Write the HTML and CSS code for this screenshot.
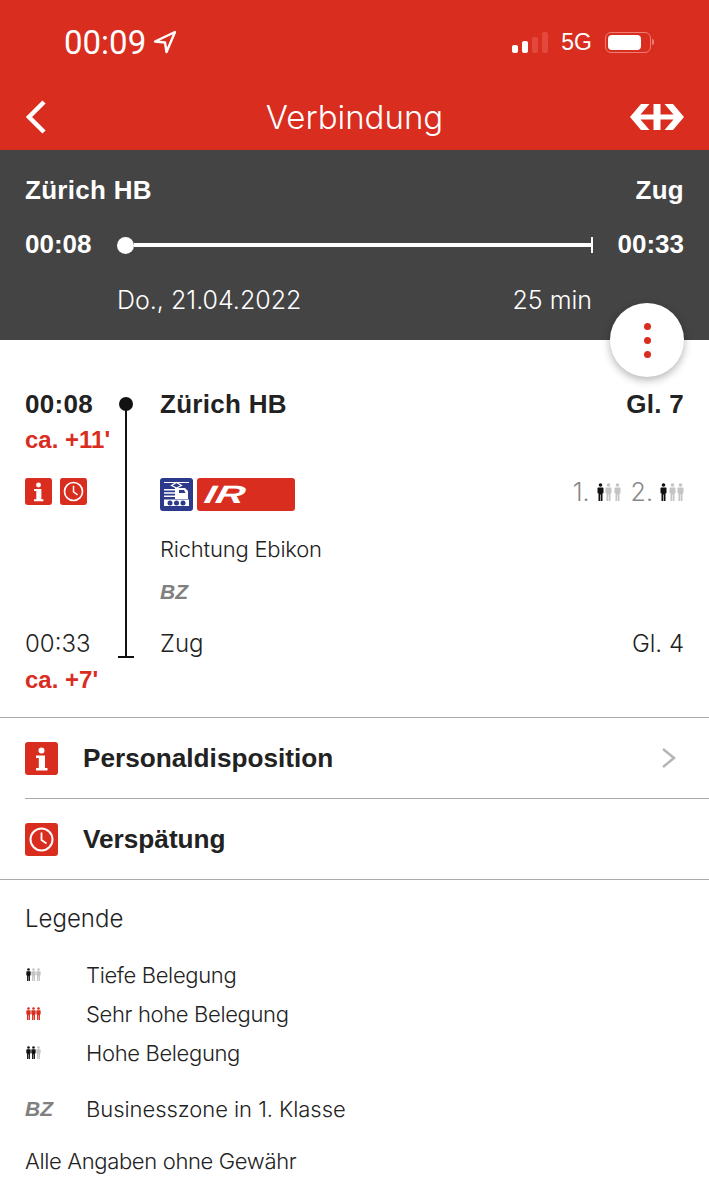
FILE: index.html
```html
<!DOCTYPE html>
<html lang="de">
<head>
    <meta charset="UTF-8">
    <meta name="viewport" content="width=device-width, initial-scale=1.0">
    <title>Verbindung</title>
    <link rel="stylesheet" href="styles.css">
</head>
<body>
    <svg class="defs" width="0" height="0" aria-hidden="true">
        <symbol id="person" viewBox="0 0 6 18">
            <circle cx="3" cy="2" r="1.8"/>
            <path d="M0.6 4.600h4.800a.6.6 0 0 1 .6.6v4.900l-1 .4V18H3.300v-6.500h-.6V18H1v-7.500l-1-.4V5.200a.6.6 0 0 1 .6-.6z"/>
        </symbol>
        <symbol id="info" viewBox="0 0 33 33">
            <rect width="33" height="33" rx="3" fill="#d92d1f"/>
            <circle cx="16.500" cy="8.500" r="3" fill="#fff"/>
            <path d="M11 13.500h9v12.500h2.500v2.500H11V26h2.800V16H11z" fill="#fff"/>
        </symbol>
        <symbol id="clock" viewBox="0 0 33 33">
            <rect width="33" height="33" rx="3" fill="#d92d1f"/>
            <circle cx="16.500" cy="16.500" r="11" fill="none" stroke="#fff" stroke-width="2"/>
            <path d="M16.500 9.500v7.500l5 3.500" fill="none" stroke="#fff" stroke-width="1.800"/>
        </symbol>
    </svg>

    <header class="app-header">
        <div class="status-bar">
            <div class="status-left">
                <span class="status-time">00:09</span>
                <svg class="location-icon" width="24" height="24" viewBox="0 0 24 24">
                    <path d="M22 2 2 11.500l10 1 1.500 9.500z" fill="none" stroke="#fff" stroke-width="2.400" stroke-linejoin="round"/>
                </svg>
            </div>
            <div class="status-right">
                <div class="signal">
                    <span class="bar bar-1"></span>
                    <span class="bar bar-2"></span>
                    <span class="bar bar-3 off"></span>
                    <span class="bar bar-4 off"></span>
                </div>
                <span class="status-net">5G</span>
                <div class="battery"><span class="battery-fill"></span></div>
                <span class="battery-cap"></span>
            </div>
        </div>
        <div class="nav-bar">
            <svg class="back-icon" width="22" height="34" viewBox="0 0 22 34">
                <path d="M19 2 4 17l15 15" fill="none" stroke="#fff" stroke-width="4.500"/>
            </svg>
            <h1>Verbindung</h1>
            <svg class="sbb-logo" width="54" height="26" viewBox="0 0 54 26">
                <path d="M0 13 11 0h8.500l-9 10.500h13V0h7v10.500h13l-9-10.500H43l11 13-11 13h-8.500l9-10.500h-13V26h-7V15.500h-13l9 10.500H11z" fill="#fff"/>
            </svg>
        </div>
    </header>

    <section class="summary">
        <div class="summary-stations">
            <span>Zürich HB</span>
            <span>Zug</span>
        </div>
        <div class="summary-times">
            <span>00:08</span>
            <div class="summary-line"><span class="line-dot"></span><span class="line-bar"></span><span class="line-end"></span></div>
            <span>00:33</span>
        </div>
        <div class="summary-meta">
            <span>Do., 21.04.2022</span>
            <span>25 min</span>
        </div>
        <button class="more-btn" aria-label="Mehr"><span></span><span></span><span></span></button>
    </section>

    <section class="leg">
        <div class="leg-line"></div>
        <div class="leg-row row-from">
            <span class="bold">00:08</span>
            <span class="bold">Zürich HB</span>
            <span class="bold">Gl. 7</span>
        </div>
        <div class="delay delay-from">ca. +11'</div>
        <div class="leg-row row-train">
            <div class="leg-icons">
                <svg width="27" height="27"><use href="#info"/></svg>
                <svg width="27" height="27"><use href="#clock"/></svg>
            </div>
            <div class="train-badges">
                <svg class="loco-icon" width="33" height="33" viewBox="0 0 33 33">
                    <rect width="33" height="33" rx="3" fill="#2d3a8c"/>
                    <path d="M4 4.500h25M16.500 4.500l5 3-5 2.500-5-2.500z" fill="none" stroke="#fff" stroke-width="1.200"/>
                    <path d="M4 11h11v1.600H4zm0 3.200h11v1.600H4zm0 3.200h11V19H4zM15 10h10l3 3v8H15z" fill="#fff"/>
                    <path d="M19 12h5l1.500 3H19z" fill="#2d3a8c"/>
                    <path d="M4 21.500h25V28H4z" fill="#fff"/>
                    <circle cx="10" cy="25" r="2.500" fill="#2d3a8c"/>
                    <circle cx="16.500" cy="25" r="2.500" fill="#2d3a8c"/>
                    <circle cx="23" cy="25" r="2.500" fill="#2d3a8c"/>
                </svg>
                <div class="train-name"><span>IR</span></div>
            </div>
            <div class="occupancy">
                <span>1.</span>
                <span class="people"><svg class="on"><use href="#person"/></svg><svg class="low"><use href="#person"/></svg><svg class="low"><use href="#person"/></svg></span>
                <span class="class-two">2.</span>
                <span class="people"><svg class="on"><use href="#person"/></svg><svg class="low"><use href="#person"/></svg><svg class="low"><use href="#person"/></svg></span>
            </div>
        </div>
        <div class="direction">Richtung Ebikon</div>
        <div class="bz bz-leg">BZ</div>
        <div class="leg-row row-to">
            <span>00:33</span>
            <span>Zug</span>
            <span>Gl. 4</span>
        </div>
        <div class="delay delay-to">ca. +7'</div>
    </section>

    <a class="notice">
        <svg width="33" height="33"><use href="#info"/></svg>
        <span>Personaldisposition</span>
        <svg class="chevron" width="16" height="22" viewBox="0 0 16 22">
            <path d="M2 2l11 9-11 9" fill="none" stroke="#b5b5b5" stroke-width="2.500"/>
        </svg>
    </a>
    <a class="notice notice-last">
        <svg width="33" height="33"><use href="#clock"/></svg>
        <span>Verspätung</span>
    </a>

    <section class="legend">
        <h2>Legende</h2>
        <div class="legend-row">
            <span class="people small"><svg class="on"><use href="#person"/></svg><svg class="low"><use href="#person"/></svg><svg class="low"><use href="#person"/></svg></span>
            <span>Tiefe Belegung</span>
        </div>
        <div class="legend-row">
            <span class="people small"><svg class="red"><use href="#person"/></svg><svg class="red"><use href="#person"/></svg><svg class="red"><use href="#person"/></svg></span>
            <span>Sehr hohe Belegung</span>
        </div>
        <div class="legend-row">
            <span class="people small"><svg class="on"><use href="#person"/></svg><svg class="on"><use href="#person"/></svg><svg class="low"><use href="#person"/></svg></span>
            <span>Hohe Belegung</span>
        </div>
        <div class="legend-row legend-bz">
            <span class="bz">BZ</span>
            <span>Businesszone in 1. Klasse</span>
        </div>
        <p>Alle Angaben ohne Gewähr</p>
    </section>
</body>
</html>
```

FILE: styles.css
```css
/* General Styles */
body {
    margin: 0;
    background-color: #ffffff;
    color: #222222;
    font-family: 'Inter', 'Liberation Sans', sans-serif;
    font-weight: 300;
    font-size: 24px;
    height: 1200px;
    overflow: hidden;
}

.defs {
    position: absolute;
}

.bold {
    font-family: 'Liberation Sans', sans-serif;
    font-weight: 700;
    font-size: 26px;
    letter-spacing: 0.3px;
}

/* Header */
.app-header {
    background-color: #d92d1f;
    color: #ffffff;
    height: 150px;
}

.status-bar {
    height: 84px;
    padding: 0 55px 0 64px;
    display: flex;
    justify-content: space-between;
    align-items: center;
}

.status-left {
    display: flex;
    align-items: center;
    gap: 7px;
}

.status-time {
    font-family: 'Roboto', sans-serif;
    font-weight: 400;
    font-size: 33px;
}

.status-right {
    display: flex;
    align-items: center;
}

.signal {
    display: flex;
    align-items: flex-end;
    gap: 4px;
    height: 21px;
    margin-right: 13px;
}

.bar {
    width: 6px;
    border-radius: 2px;
    background-color: #ffffff;
}

.bar-1 { height: 8px; }
.bar-2 { height: 12px; }
.bar-3 { height: 16px; }
.bar-4 { height: 21px; }

.bar.off {
    background-color: #e2493c;
}

.status-net {
    font-family: 'Liberation Sans', sans-serif;
    font-weight: 400;
    font-size: 23px;
    margin-right: 13px;
}

.battery {
    width: 46px;
    height: 21px;
    box-sizing: border-box;
    padding: 2px 9px 2px 2px;
    border: 1.5px solid #ee7d73;
    border-radius: 6px;
}

.battery-fill {
    display: block;
    width: 100%;
    height: 100%;
    background-color: #ffffff;
    border-radius: 4px;
}

.battery-cap {
    width: 2px;
    height: 6px;
    margin-left: 1px;
    background-color: #ee7d73;
    border-radius: 0 2px 2px 0;
}

.nav-bar {
    height: 66px;
    padding: 0 25px;
    display: grid;
    grid-template-columns: 1fr auto 1fr;
    align-items: center;
}

.nav-bar h1 {
    margin: 0;
    font-size: 33px;
    font-weight: 300;
}

.sbb-logo {
    justify-self: end;
}

/* Connection summary */
.summary {
    position: relative;
    height: 190px;
    box-sizing: border-box;
    padding: 24px 25px 0;
    background-color: #444444;
    color: #ffffff;
}

.summary-stations,
.summary-times {
    display: flex;
    justify-content: space-between;
    align-items: center;
    font-family: 'Liberation Sans', sans-serif;
    font-weight: 700;
    font-size: 26px;
}

.summary-stations {
    height: 32px;
    letter-spacing: 0.3px;
}

.summary-times {
    height: 32px;
    margin-top: 22px;
}

.summary-line {
    flex: 1;
    display: flex;
    align-items: center;
    margin: 2px 25px 0;
}

.line-dot {
    width: 17px;
    height: 17px;
    border-radius: 50%;
    background-color: #ffffff;
}

.line-bar {
    flex: 1;
    height: 4px;
    background-color: #ffffff;
}

.line-end {
    width: 2px;
    height: 16px;
    background-color: #ffffff;
}

.summary-meta {
    display: flex;
    justify-content: space-between;
    margin-top: 25px;
    padding: 0 92px;
    font-size: 25px;
}

.more-btn {
    position: absolute;
    right: 25px;
    bottom: -37px;
    width: 74px;
    height: 74px;
    padding: 0;
    border: none;
    border-radius: 50%;
    background-color: #ffffff;
    box-shadow: 0 3px 8px rgba(0, 0, 0, 0.3);
    display: flex;
    flex-direction: column;
    justify-content: center;
    align-items: center;
    gap: 7px;
}

.more-btn span {
    width: 7px;
    height: 7px;
    border-radius: 50%;
    background-color: #d92d1f;
}

/* Leg */
.leg {
    position: relative;
    height: 378px;
    box-sizing: border-box;
    padding: 48px 25px 0;
    border-bottom: 1px solid #aaaaaa;
}

.leg-line {
    position: absolute;
    left: 118px;
    top: 63px;
    width: 16px;
    height: 253px;
    border-bottom: 2px solid #111111;
    background: linear-gradient(#111111, #111111) center / 2px 100% no-repeat;
}

.leg-line::before {
    content: "";
    position: absolute;
    left: 1px;
    top: -6px;
    width: 14px;
    height: 14px;
    border-radius: 50%;
    background-color: #111111;
}

.leg-row {
    display: grid;
    grid-template-columns: 135px 1fr auto;
    align-items: center;
}

.row-from {
    height: 32px;
}

.delay {
    font-family: 'Liberation Sans', sans-serif;
    font-weight: 700;
    color: #d92d1f;
    font-size: 24px;
    height: 30px;
    line-height: 30px;
}

.delay-from {
    margin-top: 5px;
}

.row-train {
    margin-top: 23px;
    align-items: start;
}

.leg-icons {
    display: flex;
    gap: 8px;
}

.train-badges {
    display: flex;
    gap: 4px;
}

.train-name {
    width: 98px;
    height: 33px;
    box-sizing: border-box;
    padding-left: 8px;
    background-color: #d92d1f;
    border-radius: 3px;
    color: #ffffff;
    font-family: 'Liberation Sans', sans-serif;
    font-weight: 700;
    font-style: italic;
    font-size: 25px;
    line-height: 33px;
}

.train-name span {
    display: inline-block;
    transform: scaleX(1.6) skewX(-8deg);
    transform-origin: left center;
}

.occupancy {
    display: flex;
    align-items: center;
    gap: 7px;
    color: #888888;
    height: 27px;
    font-size: 25px;
}

.class-two {
    margin-left: 3px;
}

.people {
    display: flex;
    gap: 1.5px;
}

.people svg {
    width: 7px;
    height: 18px;
}

.people.small {
    width: 60px;
    padding-left: 1px;
    gap: 0;
}

.people.small svg {
    width: 5px;
    height: 13px;
}

.on { fill: #111111; }
.low { fill: #c4c4c4; }
.red { fill: #d92d1f; }

.direction {
    margin-top: 23px;
    padding-left: 135px;
    font-size: 22px;
    letter-spacing: -0.2px;
    height: 30px;
    line-height: 30px;
}

.bz {
    font-family: 'Liberation Sans', sans-serif;
    font-weight: 700;
    font-style: italic;
    color: #808080;
    font-size: 21px;
}

.bz-leg {
    margin-top: 13px;
    padding-left: 135px;
    height: 30px;
    line-height: 30px;
}

.row-to {
    margin-top: 20px;
    height: 32px;
}

.delay-to {
    margin-top: 6px;
}

/* Notices */
.notice {
    display: flex;
    align-items: center;
    gap: 25px;
    height: 80px;
    margin-left: 25px;
    border-bottom: 1px solid #aaaaaa;
    font-family: 'Liberation Sans', sans-serif;
    font-weight: 700;
    font-size: 26.200px;
}

.notice .chevron {
    margin-left: auto;
    margin-right: 32px;
}

.notice-last {
    margin-left: 0;
    padding-left: 25px;
}

/* Legend */
.legend {
    padding: 23px 25px 0;
    font-size: 22px;
    letter-spacing: -0.35px;
}

.legend h2 {
    margin: 0 0 20px;
    font-size: 24px;
    font-weight: 300;
    letter-spacing: 0;
    height: 32px;
    line-height: 32px;
}

.legend-row {
    display: flex;
    align-items: center;
    height: 39px;
}

.legend-bz {
    margin-top: 17px;
    letter-spacing: -0.05px;
}

.legend-bz .bz {
    width: 61px;
    letter-spacing: 0;
}

.legend p {
    margin: 14px 0 0;
    height: 39px;
    line-height: 39px;
}
```
